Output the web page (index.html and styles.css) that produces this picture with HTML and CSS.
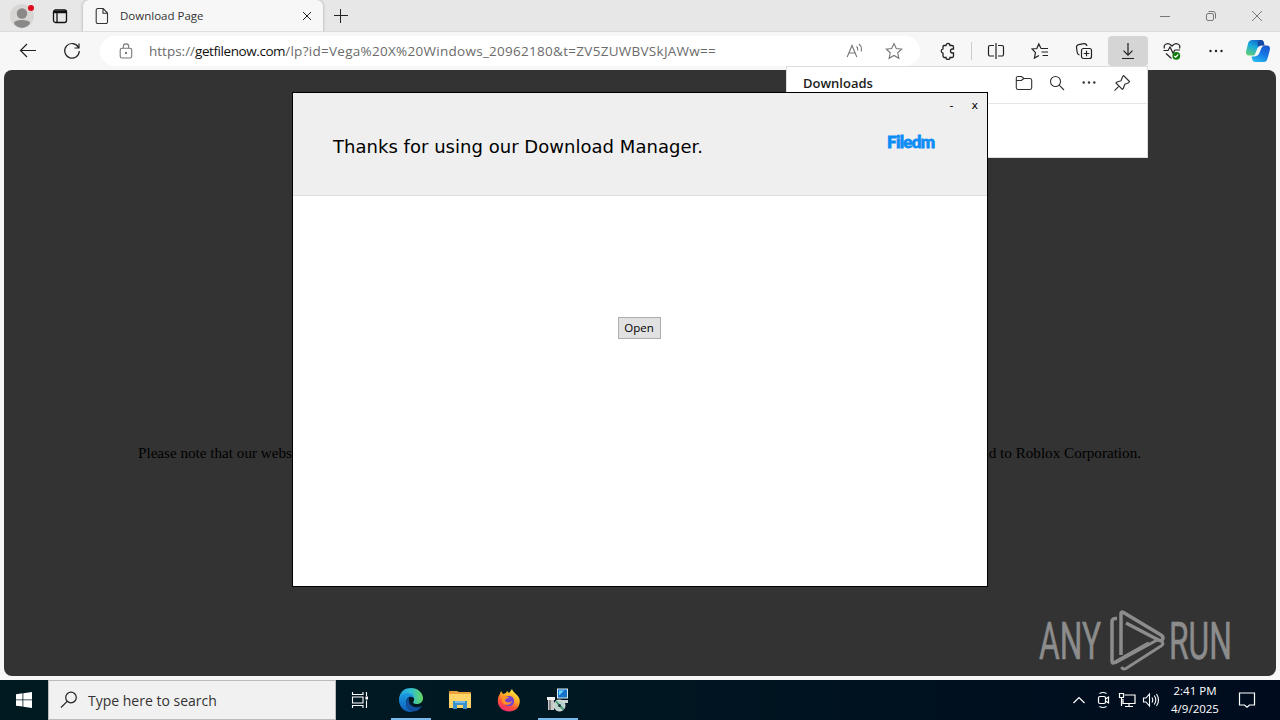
FILE: index.html
```html
<!DOCTYPE html>
<html lang="en">
<head>
  <meta charset="UTF-8">
  <title>Download Page</title>
  <link rel="stylesheet" href="styles.css">
</head>
<body>
  <div class="desktop">

    <!-- Browser -->
    <div class="browser">
      <div class="tab-strip">
        <div class="profile">
          <svg width="30" height="30" viewBox="0 0 30 30">
            <circle cx="15" cy="15" r="12" fill="#d8d6d4"/>
            <circle cx="15" cy="12.500" r="5.200" fill="#8b8988"/>
            <path d="M7 22c0-4 16-4 16 0 0 1-2 4-8 5-6-1-8-4-8-5z" fill="#8b8988"/>
            <circle cx="24" cy="7" r="3" fill="#e00b1c"/>
          </svg>
        </div>
        <svg class="workspaces" width="16" height="16" viewBox="0 0 16 16" fill="none" stroke="#111" stroke-width="1.300">
          <rect x="1.500" y="2" width="13" height="12.500" rx="2"/>
          <path d="M2 4h12" stroke-width="2.500"/><path d="M5 4v10"/>
        </svg>
        <div class="tab">
          <svg width="14" height="18" viewBox="0 0 14 18" fill="none" stroke="#333" stroke-width="1.100">
            <path d="M2.500 1.500h5.700L12.500 6v9a1.500 1.500 0 0 1-1.500 1.500H2.500A1.500 1.500 0 0 1 1.200 15V3a1.500 1.500 0 0 1 1.300-1.500zM8 1.700v4.600h4.400"/>
          </svg>
          <span class="tab-title">Download Page</span>
          <svg class="tab-close" width="10" height="10" viewBox="0 0 10 10" stroke="#222"><path d="M1 1l8 8M9 1l-8 8"/></svg>
        </div>
        <svg class="new-tab" width="16" height="16" viewBox="0 0 16 16" stroke="#222"><path d="M1 7.500h14M7.500 1v14"/></svg>
        <div class="window-buttons">
          <svg width="12" height="12" viewBox="0 0 12 12" stroke="#777"><path d="M1 6.500h10"/></svg>
          <svg width="12" height="12" viewBox="0 0 12 12" stroke="#777" fill="none"><rect x="1.500" y="3.500" width="7" height="7" rx="1.500"/><path d="M3.500 1.500H8a2.500 2.500 0 0 1 2.500 2.500v4.500"/></svg>
          <svg width="12" height="12" viewBox="0 0 12 12" stroke="#777"><path d="M1 1l10 10M11 1L1 11"/></svg>
        </div>
      </div>

      <div class="toolbar">
        <div class="nav-btn"><svg width="18" height="16" viewBox="0 0 18 16" fill="none" stroke="#222" stroke-width="1.200"><path d="M17 7.500H1.500M8 1L1.500 7.500 8 14"/></svg></div>
        <div class="nav-btn"><svg width="18" height="18" viewBox="0 0 18 18" fill="none" stroke="#222" stroke-width="1.200"><path d="M15.500 5.500A7.300 7.300 0 1 0 16.300 9M16 1.500v4.500h-4.500"/></svg></div>
        <div class="address">
          <svg class="lock" width="14" height="16" viewBox="0 0 14 16" fill="none" stroke="#777" stroke-width="1.100"><rect x="1.200" y="5.300" width="11.500" height="9.700" rx="1.800"/><path d="M4.300 5V3.600a2.700 2.700 0 0 1 5.400 0V5"/><circle cx="7" cy="10" r=".6" fill="#555"/></svg>
          <span class="url">https://<b>getfilenow.com</b><span class="path">/lp?id=Vega%20X%20Windows_20962180&amp;t=ZV5ZUWBVSkJAWw==</span></span>
          <svg class="read" width="17" height="16" viewBox="0 0 17 16" fill="none" stroke="#777" stroke-width="1.100"><path d="M1.200 14L6 2.500 10.800 14M3 10h6M10.500 3.500q1.700 1.500 1 4M13 1q3.500 3 2 7.500"/></svg>
          <svg class="star" width="18" height="18" viewBox="0 0 18 18" fill="none" stroke="#777" stroke-width="1.100"><path d="M9 1.500l2.300 5 5.500.6-4.100 3.700 1.200 5.500L9 13.500l-4.900 2.800 1.200-5.500L1.200 7.100l5.500-.6z"/></svg>
        </div>
        <div class="tools">
          <div class="tool"><svg width="18" height="18" viewBox="0 0 18 18" fill="none" stroke="#222" stroke-width="1.300"><path d="M5 3.500h2a2 2 0 0 1 4 0h2A1.500 1.500 0 0 1 14.500 5v2h-1a2 2 0 0 0 0 4h1v3a1.500 1.500 0 0 1-1.500 1.500h-2a2 2 0 0 1-4 0H5.500A1.500 1.500 0 0 1 4 14v-2.800a2.200 2.200 0 0 1 0-4.300V4.500a1 1 0 0 1 1-1z"/></svg></div>
          <div class="divider"></div>
          <div class="tool"><svg width="18" height="18" viewBox="0 0 18 18" fill="none" stroke="#222" stroke-width="1.200"><path d="M7 3.500H3A1.500 1.500 0 0 0 1.500 5v7.500A1.500 1.500 0 0 0 3 14h4M11 3.500h4A1.500 1.500 0 0 1 16.500 5v7.500A1.500 1.500 0 0 1 15 14h-4M9 1v16"/></svg></div>
          <div class="tool"><svg width="18" height="18" viewBox="0 0 18 18" fill="none" stroke="#222" stroke-width="1.200"><path d="M10 6.500L7.800 2 5.800 6.500 1 7l3.500 3.600L3.400 16 8 13.500M10 6.500h7M10.500 10H17M11.500 13.500H17"/></svg></div>
          <div class="tool"><svg width="18" height="18" viewBox="0 0 18 18" fill="none" stroke="#222" stroke-width="1.200"><rect x="6.500" y="6.500" width="10" height="10" rx="2"/><path d="M11.500 8.700v5.600M8.700 11.500h5.600M4.500 13A3 3 0 0 1 2.200 10.500L1.500 5.500A2.500 2.500 0 0 1 3.700 2.700L9 1.700a2.600 2.600 0 0 1 2.800 2.300"/></svg></div>
          <div class="tool active"><svg width="18" height="18" viewBox="0 0 18 18" fill="none" stroke="#222" stroke-width="1.200"><path d="M9 1v12M4.500 8.700L9 13.200l4.500-4.500M3 16.500h12"/></svg></div>
          <div class="tool"><svg width="20" height="20" viewBox="0 0 20 20" fill="none" stroke="#222" stroke-width="1.200"><path d="M2.500 7.500C1 3.500 6 .5 10 5c4-4.500 9-1.500 7.500 2.500M1.500 9.500H6L8 6l3 6 2-3h5M4 12.500l5.500 5"/><circle cx="14.300" cy="14.800" r="3.900" fill="#107c10" stroke="none"/><path d="M12.400 15l1.300 1.200 2.500-2.700" stroke="#fff"/></svg></div>
          <div class="tool"><svg width="16" height="4" viewBox="0 0 16 4" fill="#222"><circle cx="2.500" cy="2" r="1.200"/><circle cx="8" cy="2" r="1.200"/><circle cx="13.500" cy="2" r="1.200"/></svg></div>
          <div class="tool copilot">
            <svg width="26" height="24" viewBox="0 0 26 24">
              <defs>
                <linearGradient id="cpA" x1=".7" y1="0" x2=".2" y2="1"><stop offset="0" stop-color="#1265c4"/><stop offset=".45" stop-color="#18a9df"/><stop offset="1" stop-color="#62cf75"/></linearGradient>
                <linearGradient id="cpB" x1=".8" y1="0" x2=".3" y2="1"><stop offset="0" stop-color="#1b55cf"/><stop offset=".5" stop-color="#1677e5"/><stop offset="1" stop-color="#27b7ed"/></linearGradient>
              </defs>
              <path d="M7.500 1H16q2 0 2.600 2l.8 3h-3q-2 0-2.700 2l-2 6q-.8 2.500-3 2.500H4.500Q0 16.500 1.200 12l2-8Q4.200 1 7.500 1z" fill="url(#cpA)"/>
              <path d="M18.500 23H10q-2 0-2.600-2l-.9-3.500h3q2 0 2.700-2l2-6.500q.8-2.500 3-2.500h4.300q4.500 0 3.200 5l-2.200 8q-.8 3.500-3.600 3.500z" fill="url(#cpB)"/>
              <path d="M16 1h.3q1.800 0 2.400 2l.8 3.400h-3.300q-1.800 0-2.500 2L12.500 5q0-4 3.500-4z" fill="#1649a5"/>
              <path d="M16 7q-2.500 0-3.500 2l-2 5q-.6 2.500-2.300 3h1.500q3.500 0 4.500-2.500l2-5q.6-2 2.300-2.500z" fill="#f7f7f7"/>
            </svg>
          </div>
        </div>
      </div>

      <div class="page">
        <p class="notice"><span>Please note that our webs</span><span>d to Roblox Corporation.</span></p>
      </div>
    </div>

    <!-- Downloads flyout -->
    <div class="downloads">
      <div class="downloads-head">
        <span class="downloads-title">Downloads</span>
        <svg width="18" height="16" viewBox="0 0 18 16" fill="none" stroke="#333" stroke-width="1.100"><path d="M3 1.500h3.500L9 3.500h6A1.700 1.700 0 0 1 16.700 5v8a1.700 1.700 0 0 1-1.700 1.500H3A1.700 1.700 0 0 1 1.300 13V3A1.600 1.600 0 0 1 3 1.500zM1.500 5.500h4.800L9 3.500"/></svg>
        <svg width="16" height="16" viewBox="0 0 16 16" fill="none" stroke="#333" stroke-width="1.100"><circle cx="6.500" cy="6.500" r="5"/><path d="M10.200 10.200L15 15"/></svg>
        <svg width="16" height="16" viewBox="0 0 16 16" fill="#333"><circle cx="2.700" cy="7.500" r="1.200"/><circle cx="8" cy="7.500" r="1.200"/><circle cx="13.300" cy="7.500" r="1.200"/></svg>
        <svg width="18" height="18" viewBox="0 0 18 18" fill="none" stroke="#333" stroke-width="1.200" stroke-linejoin="round"><path d="M10.500 1.500l6 6-1 1.300-3.700 1.500-1.500 4.200-1 .8L3 9l1-1 4-1.300L9.700 2.500zM6 12.200L1.500 16.700"/></svg>
      </div>
    </div>

    <!-- Installer window -->
    <div class="installer">
      <div class="installer-head">
        <h1>Thanks for using our Download Manager.</h1>
        <div class="installer-side">
          <div class="installer-controls"><span>-</span><span>x</span></div>
          <div class="logo">Filedm</div>
        </div>
      </div>
      <div class="installer-body">
        <button class="open-btn">Open</button>
      </div>
    </div>

    <!-- Watermark -->
    <svg class="watermark" width="204" height="66" viewBox="0 0 204 66">
      <text x="1" y="50" textLength="62" lengthAdjust="spacingAndGlyphs">ANY</text>
      <g fill="none" stroke="#8c8c8c" stroke-width="3.500">
        <path d="M83 46V4.500q0-2.500 2.500-1L123 26q3 2 1.500 4.500-1.500 2-4 .5L88 14"/>
        <path d="M79 9.500q-5-.5-5 3V52q0 3 2.500 1.500L111 34"/>
        <path d="M123 32q4 2.500 0 5L88 59.500q-3 1.500-4.500-1.500M77 54l44-24" stroke-width="3"/>
      </g>
      <text x="131" y="50" textLength="63" lengthAdjust="spacingAndGlyphs">RUN</text>
    </svg>

    <!-- Taskbar -->
    <div class="taskbar">
      <div class="start"><svg width="16" height="16" viewBox="0 0 16 16" fill="#fff"><path d="M0 2.300L6.500 1.300V7.500H0zM7.300 1.200L16 0v7.500H7.300zM0 8.300h6.500v6.300L0 13.700zM7.300 8.300H16V16l-8.700-1.200z"/></svg></div>
      <div class="search">
        <svg width="18" height="18" viewBox="0 0 18 18" fill="none" stroke="#222" stroke-width="1.200"><circle cx="11" cy="6.500" r="5.300"/><path d="M7.200 10.300L1 16.500"/></svg>
        <span>Type here to search</span>
      </div>
      <div class="task-icon"><svg width="18" height="18" viewBox="0 0 18 18" fill="none" stroke="#fff" stroke-width="1.100"><path d="M1.500 1v2.500h10.500V1M1.500 17v-2.500h10.500V17M1.500 6h10.500v6H1.500zM15.500 1v4M15.500 9.500V17"/><rect x="14.500" y="5.500" width="2.500" height="3" fill="#fff" stroke="none"/></svg></div>
      <div class="task-icon wide running">
        <svg width="26" height="26" viewBox="0 0 26 26">
          <defs>
            <linearGradient id="edA" x1="0" y1=".3" x2="1" y2=".3"><stop offset="0" stop-color="#249de0"/><stop offset=".5" stop-color="#30bfd0"/><stop offset="1" stop-color="#65d75d"/></linearGradient>
            <linearGradient id="edB" x1="0" y1="0" x2="0" y2="1"><stop offset="0" stop-color="#1b9de2"/><stop offset="1" stop-color="#0f5db8"/></linearGradient>
          </defs>
          <path d="M1 12C2 4 7 1 13 1c7 0 12 5 12 10 0 4-3 6-6.500 6-3 0-4-1-3-2.500 2-3-.5-6-4-6C7 8.500 3 10 1 12z" fill="url(#edA)"/>
          <path d="M1 13c0-4 4-7 8.500-7 4 0 6.500 2.500 6.500 5-4-3-8 0-8 5 0 4 3 7.500 7 8.500C8 26.500 1 21 1 13z" fill="url(#edB)"/>
          <path d="M11 10.500c-6 4.500-2 14.500 4.500 14 4 0 7-3 8.300-5.500-5 2.500-11 1-12.500-3-.7-2-.3-4-.3-5.500z" fill="#124f9c"/>
        </svg>
      </div>
      <div class="task-icon wide">
        <svg width="22" height="20" viewBox="0 0 22 20"><path d="M0 2q0-1 1-1h7l2 1h11q1 0 1 1v3H0z" fill="#e8a33d"/><path d="M0 4h22v14H0z" fill="#fcd468"/><path d="M4 11h14v8h-4v-4H8v4H4z" fill="#3b91cc"/><path d="M6 11h10v2H6z" fill="#72bce8"/></svg>
      </div>
      <div class="task-icon wide">
        <svg width="24" height="24" viewBox="0 0 24 24">
          <defs><linearGradient id="ffA" x1=".8" y1="0" x2=".3" y2="1"><stop offset="0" stop-color="#fff04a"/><stop offset=".4" stop-color="#ffad25"/><stop offset=".7" stop-color="#ff5336"/><stop offset="1" stop-color="#f0267a"/></linearGradient></defs>
          <path d="M4 3l2 3 3-1 1-2 2 2 3-4c1 4 6 5 7.500 10C24 18 19 23.500 12 23.500S.5 18.500.8 12.500C1 8 3 7 4 3z" fill="url(#ffA)"/>
          <circle cx="12" cy="13" r="5.200" fill="#7543cf"/>
          <path d="M5 8c3-1 4 1 7 1-1 2-4 1.500-4 3 0 3 5 3 7 1-1 5-9 5-10 0z" fill="#ff9426"/>
        </svg>
      </div>
      <div class="task-icon wide running">
        <svg width="24" height="24" viewBox="0 0 24 24">
          <path d="M2 10h6v12H2z" fill="#c8c8c8"/><path d="M1 9h8v3H1z" fill="#f2f2f2"/><path d="M4 12v10" stroke="#444"/>
          <rect x="11.500" y="1" width="10" height="9" fill="#1672ca" stroke="#dcecf4"/><path d="M13 2.500h5l-5 5z" fill="#68d8fc"/>
          <path d="M10 12h12v3H10z" fill="#ced3d5"/>
          <circle cx="13.500" cy="17.500" r="5.500" fill="#b9d3cd" stroke="#e7e7e7"/><path d="M13.500 17.500L10 13M13.500 17.500l4 4" stroke="#4c9b76" stroke-width="2"/><circle cx="13.500" cy="17.500" r="1.500" fill="#233"/>
        </svg>
      </div>
      <div class="tray">
        <div class="tray-icon"><svg width="14" height="14" viewBox="0 0 14 14" fill="none" stroke="#fff" stroke-width="1.200"><path d="M1.500 10L7 4.500 12.500 10"/></svg></div>
        <div class="tray-icon"><svg width="14" height="18" viewBox="0 0 14 18" fill="none" stroke="#fff" stroke-width="1.200"><rect x="2.500" y="5.500" width="7" height="7" rx="1.500"/><path d="M9.500 8l3-2v6l-3-2M3.500 2.500q3.500-2 7 0M3.500 15.500q3.500 2 7 0"/></svg></div>
        <div class="tray-icon"><svg width="18" height="16" viewBox="0 0 18 16" fill="none" stroke="#fff" stroke-width="1.200"><path d="M6.500 3H17v8.500H5V7M11 11.500v3M7 14.500h8M1.500 1.500h4v4h-4zM3.500 5.500V14"/></svg></div>
        <div class="tray-icon"><svg width="18" height="16" viewBox="0 0 18 16" fill="none" stroke="#fff" stroke-width="1.100"><path d="M1.500 6H4l3.500-4v12L4 10H1.500zM10 5.500q1.500 2.500 0 5M12.300 3.500q3 4.500 0 9M14.500 2q4 6 0 12"/></svg></div>
        <div class="clock"><div>2:41 PM</div><div>4/9/2025</div></div>
        <svg class="notify" width="18" height="18" viewBox="0 0 18 18" fill="none" stroke="#fff" stroke-width="1.200"><path d="M1.500 2h15v12h-5L9 16.300 6.500 14h-5z"/></svg>
      </div>
    </div>
  </div>
</body>
</html>
```
FILE: styles.css
```css
* {
  box-sizing: border-box;
}

body {
  margin: 0;
  font-family: "Open Sans", "Noto Sans", sans-serif;
  overflow: hidden;
}

svg {
  display: block;
  flex-shrink: 0;
}

.desktop {
  position: relative;
  width: 1280px;
  height: 720px;
  display: flex;
  flex-direction: column;
}

/* Browser */
.browser {
  height: 680px;
  display: flex;
  flex-direction: column;
  background: #f7f7f7;
}

.tab-strip {
  height: 32px;
  display: flex;
  align-items: center;
  background: #e7e7e7;
  border-bottom: 1px solid #dcdcdc;
}

.profile {
  margin-left: 7px;
  height: 30px;
}

.workspaces {
  margin-left: 15px;
}

.tab {
  width: 240px;
  height: 32px;
  margin-left: 15px;
  padding: 0 11px 0 12px;
  display: flex;
  align-items: center;
  background: #f7f7f7;
  border-radius: 6px 6px 0 0;
  box-shadow: 0 0 3px rgba(0, 0, 0, 0.3);
  clip-path: inset(0 -4px);
}

.tab-title {
  flex: 1;
  margin-left: 11px;
  font-size: 11.5px;
  color: #333;
}

.new-tab {
  margin-left: 10px;
}

.window-buttons {
  margin-left: auto;
  padding-right: 17px;
  display: flex;
  gap: 34px;
}

.toolbar {
  height: 38px;
  display: flex;
  align-items: center;
  padding: 0 0 1px 8px;
  background: #f7f7f7;
}

.nav-btn {
  width: 40px;
  margin-right: 4px;
  display: flex;
  justify-content: center;
}

.address {
  width: 820px;
  height: 30px;
  margin-left: 4px;
  padding: 0 17px 0 19px;
  display: flex;
  align-items: center;
  background: #fff;
  border-radius: 15px;
}

.url {
  flex: 1;
  margin-left: 16px;
  font-size: 13.5px;
  color: #6b6b6b;
  white-space: nowrap;
}

.url b {
  font-weight: normal;
  letter-spacing: -0.43px;
  color: #111;
}

.url .path {
  letter-spacing: 0.28px;
}

.star {
  margin-left: 22px;
}

.tools {
  display: flex;
  align-items: center;
  margin-left: 8px;
}

.tool {
  width: 40px;
  height: 30px;
  margin-right: 4px;
  display: flex;
  align-items: center;
  justify-content: center;
}

.tool.active {
  background: #d5d5d5;
  border-radius: 4px;
}

.divider {
  width: 1px;
  height: 18px;
  margin: 0 4px 0 -1px;
  background: #ccc;
}

.tool.copilot {
  width: 36px;
  margin-right: 0;
}

.page {
  flex: 1;
  margin: 0 4px 4px;
  background: #333;
  border-radius: 8px;
}

.notice {
  margin: 374px 135px 0 134px;
  display: flex;
  justify-content: space-between;
  font-family: "Liberation Serif", serif;
  font-size: 15.15px;
  line-height: 18px;
  color: #000;
}

/* Downloads flyout */
.downloads {
  position: absolute;
  left: 786px;
  top: 66px;
  width: 362px;
  height: 92px;
  background: #fff;
  border: 1px solid #ddd;
}

.downloads-head {
  height: 37px;
  padding: 0 16px 4px;
  display: flex;
  align-items: center;
  gap: 16px;
  border-bottom: 1px solid #e5e5e5;
}

.downloads-title {
  flex: 1;
  font-size: 13px;
  font-weight: 600;
  color: #222;
}

/* Installer window */
.installer {
  position: absolute;
  left: 292px;
  top: 92px;
  width: 696px;
  height: 495px;
  display: flex;
  flex-direction: column;
  background: #fff;
  border: 1px solid #000;
}

.installer-head {
  height: 103px;
  padding-left: 40px;
  display: flex;
  justify-content: space-between;
  background: #efefef;
  border-bottom: 1px solid #e0e0e0;
}

.installer-head h1 {
  margin: 42px 0 0;
  font-family: "DejaVu Sans", sans-serif;
  font-size: 18px;
  font-weight: normal;
  letter-spacing: 0.03px;
  line-height: 24px;
  color: #000;
}

.installer-side {
  width: 100px;
}

.installer-controls {
  margin-top: 5px;
  padding-right: 9px;
  display: flex;
  justify-content: flex-end;
  gap: 18px;
  font-family: "DejaVu Sans", sans-serif;
  font-size: 11px;
  line-height: 16px;
}

.logo {
  margin-top: 17px;
  font-family: Lato, sans-serif;
  font-size: 17px;
  font-weight: 900;
  letter-spacing: -0.7px;
  line-height: 22px;
  color: #0c8cf5;
  -webkit-text-stroke: 0.8px #0c8cf5;
}

.installer-body {
  flex: 1;
  padding: 119px 2px 0 0;
  text-align: center;
}

.open-btn {
  width: 43px;
  height: 22px;
  padding: 0;
  font-family: "Open Sans", sans-serif;
  font-size: 11.5px;
  line-height: 18px;
  color: #000;
  background: #e1e1e1;
  border: 1px solid #adadad;
}

.watermark {
  position: absolute;
  left: 1038px;
  top: 609px;
  overflow: visible;
}

.watermark text {
  font-family: Roboto, sans-serif;
  font-size: 51px;
  fill: #8c8c8c;
  stroke: #8c8c8c;
  stroke-width: 0.6px;
}

/* Taskbar */
.taskbar {
  height: 40px;
  display: flex;
  color: #fff;
  background: linear-gradient(90deg, #001a22 0%, #001822 45%, #00101f 75%, #000c1e 100%);
}

.start {
  width: 48px;
  display: flex;
  align-items: center;
  justify-content: center;
}

.search {
  width: 288px;
  padding-left: 11px;
  display: flex;
  align-items: center;
  gap: 10px;
  background: #f1f1f1;
  border: 1px solid #bbb;
  font-size: 14px;
  color: #333;
}

.task-icon {
  width: 48px;
  display: flex;
  align-items: center;
  justify-content: center;
}

.task-icon.wide {
  width: 40px;
  margin-left: 7px;
  margin-right: 2px;
}

.task-icon.running {
  border-bottom: 2px solid #76b9ed;
  padding-top: 2px;
}

.tray {
  margin-left: auto;
  display: flex;
  align-items: center;
  padding-right: 24px;
}

.tray-icon {
  width: 24px;
  display: flex;
  justify-content: center;
}

.clock {
  width: 56px;
  margin-left: 4px;
  font-size: 11.5px;
  line-height: 18px;
  text-align: center;
  white-space: nowrap;
}

.notify {
  margin-left: 15px;
}
```
